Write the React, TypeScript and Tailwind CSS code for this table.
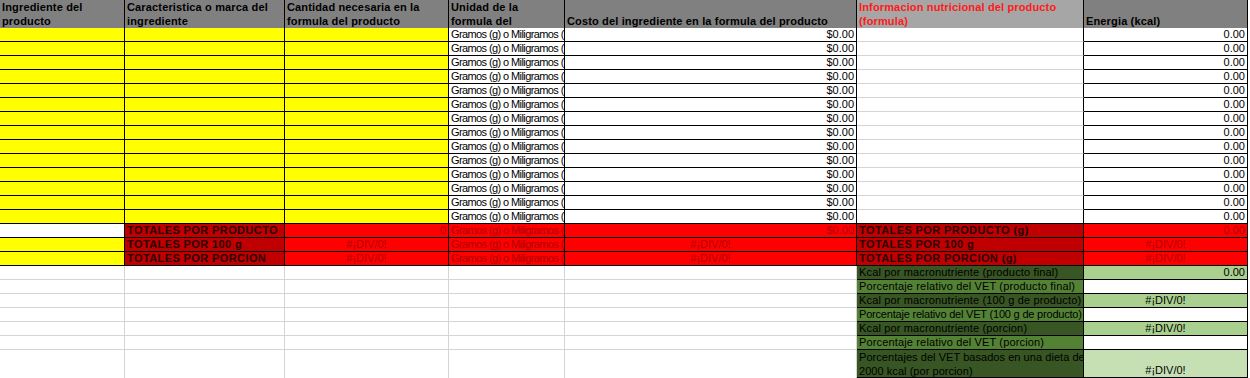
import React from "react";

const grid = "grid grid-cols-[125px_160px_164px_116px_292px_227px_164px_2px]";
const base = "font-['Liberation_Sans',sans-serif] text-[11px]";
const cell = "h-[14px] leading-[13px] border-r border-b overflow-hidden whitespace-nowrap px-[2px]";
const unit = "tracking-[-0.6px]";
const head = "bg-[#808080] border-r border-b border-black px-[2px] flex items-end";
const total = "font-bold text-[11px] tracking-[0.4px] text-[#2a0000]";

const greenRows = [
  { label: "Kcal por macronutriente (producto final)", value: "0.00", dark: true, tight: false },
  { label: "Porcentaje relativo del VET (producto final)", value: "", dark: false, tight: false },
  { label: "Kcal por macronutriente (100 g de producto)", value: "#¡DIV/0!", dark: true, tight: false },
  { label: "Porcentaje relativo del VET (100 g de producto)", value: "", dark: false, tight: true },
  { label: "Kcal por macronutriente (porcion)", value: "#¡DIV/0!", dark: true, tight: false },
  { label: "Porcentaje relativo del VET (porcion)", value: "", dark: false, tight: false },
];

const totals = [
  { left: "TOTALES POR PRODUCTO", right: "TOTALES POR PRODUCTO (g)", c3: "0", c5: "$0.00", c7: "0.00", first: true },
  { left: "TOTALES POR 100 g", right: "TOTALES POR 100 g", c3: "#¡DIV/0!", c5: "#¡DIV/0!", c7: "#¡DIV/0!", first: false },
  { left: "TOTALES POR PORCION", right: "TOTALES POR PORCION (g)", c3: "#¡DIV/0!", c5: "#¡DIV/0!", c7: "#¡DIV/0!", first: false },
];

export default function App() {
  const dataRows = Array.from({ length: 14 }, (_, i) => i);

  return (
    <div className={`w-[1250px] h-[378px] overflow-hidden bg-white text-black ${base}`}>
      {/* Header */}
      <div className={`${grid} h-[28px] font-bold text-[11px] tracking-[0.15px] leading-[14px]`}>
        <div className={head}>Ingrediente del producto</div>
        <div className={head}>Caracteristica o marca del ingrediente</div>
        <div className={head}>Cantidad necesaria en la formula del producto</div>
        <div className={head}>
          Unidad de la
          <br />
          formula del
        </div>
        <div className={head}>Costo del ingrediente en la formula del producto</div>
        <div className="bg-[#a6a6a6] border-r border-b border-black px-[2px] flex items-end text-[#ff1a1a]">
          Informacion nutricional del producto (formula)
        </div>
        <div className={head}>Energia (kcal)</div>
        <div />
      </div>

      {/* Ingredient rows */}
      {dataRows.map((i) => (
        <div key={i} className={grid}>
          <div className={`${cell} bg-[#ffff00] border-black`} />
          <div className={`${cell} bg-[#ffff00] border-black`} />
          <div className={`${cell} bg-[#ffff00] border-black`} />
          <div className={`${cell} ${unit} bg-white border-black`}>Gramos (g) o Miligramos (mg)</div>
          <div className={`${cell} bg-white border-black text-right`}>$0.00</div>
          <div className={`${cell} bg-white border-r-black ${i === 13 ? "border-b-black" : "border-b-[#d4d4d4]"}`} />
          <div className={`${cell} bg-white border-black text-right`}>0.00</div>
          <div />
        </div>
      ))}

      {/* Totals */}
      {totals.map((t) => (
        <div key={t.left} className={grid}>
          <div className={`${cell} ${t.first ? "bg-white" : "bg-[#ffff00]"} border-black`} />
          <div className={`${cell} ${total} bg-[#c00000] border-black`}>{t.left}</div>
          <div className={`${cell} bg-[#ff0000] border-black text-[#b00000] ${t.first ? "text-right" : "text-center"}`}>{t.c3}</div>
          <div className={`${cell} ${unit} bg-[#ff0000] border-black text-[#b00000]`}>Gramos (g) o Miligramos (mg)</div>
          <div className={`${cell} bg-[#ff0000] border-black text-[#b00000] ${t.first ? "text-right" : "text-center"}`}>{t.c5}</div>
          <div className={`${cell} ${total} bg-[#c00000] border-black`}>{t.right}</div>
          <div className={`${cell} bg-[#ff0000] border-black text-[#b00000] ${t.first ? "text-right" : "text-center"}`}>{t.c7}</div>
          <div />
        </div>
      ))}

      {/* Macronutrient block */}
      {greenRows.map((g) => (
        <div key={g.label} className={grid}>
          <div className={`${cell} border-[#d4d4d4]`} />
          <div className={`${cell} border-[#d4d4d4]`} />
          <div className={`${cell} border-[#d4d4d4]`} />
          <div className={`${cell} border-[#d4d4d4]`} />
          <div className={`${cell} border-[#d4d4d4]`} />
          <div
            className={`${cell} border-black ${g.tight ? "tracking-[-0.2px]" : "tracking-[0.15px]"} ${g.dark ? "bg-[#375623]" : "bg-[#548235]"}`}
          >
            {g.label}
          </div>
          <div
            className={`${cell} border-black ${g.dark ? "bg-[#a9d08e]" : "bg-white"} ${g.value === "0.00" ? "text-right" : "text-center"}`}
          >
            {g.value}
          </div>
          <div />
        </div>
      ))}
      <div className={grid}>
        <div className="h-[28px] border-r border-[#d4d4d4]" />
        <div className="h-[28px] border-r border-[#d4d4d4]" />
        <div className="h-[28px] border-r border-[#d4d4d4]" />
        <div className="h-[28px] border-r border-[#d4d4d4]" />
        <div className="h-[28px] border-r border-[#d4d4d4]" />
        <div className="h-[28px] leading-[14px] whitespace-nowrap overflow-hidden tracking-[0.05px] border-r border-b border-black bg-[#375623] px-[2px]">
          Porcentajes del VET basados en una dieta de
          <br />
          2000 kcal (por porcion)
        </div>
        <div className="h-[28px] leading-[14px] border-r border-b border-black bg-[#c6e0b4] flex items-end justify-center">
          #¡DIV/0!
        </div>
        <div />
      </div>
    </div>
  );
}
